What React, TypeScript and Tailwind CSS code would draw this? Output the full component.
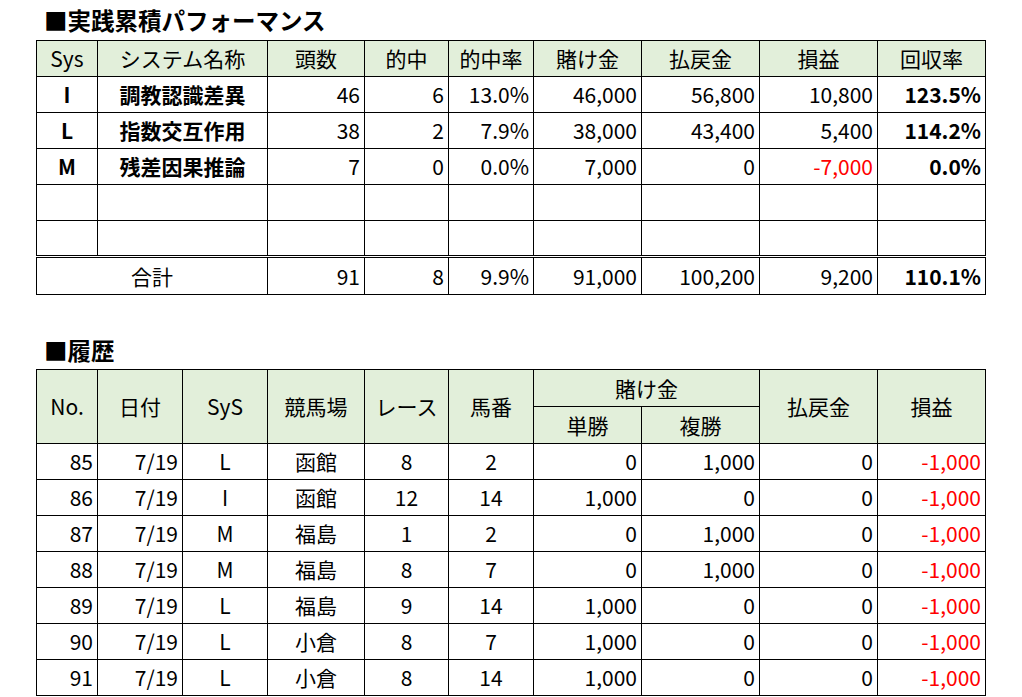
import React from "react";

const perf = [
  { sys: "I", name: "調教認識差異", n: "46", hit: "6", rate: "13.0%", bet: "46,000", ret: "56,800", pl: "10,800", rec: "123.5%", neg: false },
  { sys: "L", name: "指数交互作用", n: "38", hit: "2", rate: "7.9%", bet: "38,000", ret: "43,400", pl: "5,400", rec: "114.2%", neg: false },
  { sys: "M", name: "残差因果推論", n: "7", hit: "0", rate: "0.0%", bet: "7,000", ret: "0", pl: "-7,000", rec: "0.0%", neg: true },
];

const hist = [
  ["85", "7/19", "L", "函館", "8", "2", "0", "1,000", "0", "-1,000"],
  ["86", "7/19", "I", "函館", "12", "14", "1,000", "0", "0", "-1,000"],
  ["87", "7/19", "M", "福島", "1", "2", "0", "1,000", "0", "-1,000"],
  ["88", "7/19", "M", "福島", "8", "7", "0", "1,000", "0", "-1,000"],
  ["89", "7/19", "L", "福島", "9", "14", "1,000", "0", "0", "-1,000"],
  ["90", "7/19", "L", "小倉", "8", "7", "1,000", "0", "0", "-1,000"],
  ["91", "7/19", "L", "小倉", "8", "14", "1,000", "0", "0", "-1,000"],
];

const cell = "border border-black p-0 h-[36px] align-middle whitespace-nowrap";
const hd = "border border-black p-0 align-middle text-center font-normal bg-[#E2EFDA] whitespace-nowrap";
const R = `${cell} text-right pr-[4px]`;
const C = `${cell} text-center`;
const T = "border border-black border-t-[3px] border-t-black border-double p-0 h-[38px] align-middle whitespace-nowrap";

export default function App() {
  return (
    <div className="w-[1022px] h-[697px] overflow-hidden bg-white text-black font-['Noto_Sans_CJK_JP',sans-serif] text-[21px] leading-none pl-[36px]">
      <div className="pl-[8px] pt-[5px] h-[40px] text-[23.5px] font-bold leading-[30px]">■実践累積パフォーマンス</div>
      <table className="border-collapse table-fixed w-[950px]">
        <colgroup>
          <col className="w-[61px]" />
          <col className="w-[170px]" />
          <col className="w-[97px]" />
          <col className="w-[84px]" />
          <col className="w-[85px]" />
          <col className="w-[108px]" />
          <col className="w-[118px]" />
          <col className="w-[118px]" />
          <col className="w-[108px]" />
        </colgroup>
        <thead>
          <tr>
            {["Sys", "システム名称", "頭数", "的中", "的中率", "賭け金", "払戻金", "損益", "回収率"].map((h) => (
              <th key={h} className={`${hd} h-[36px]`}>{h}</th>
            ))}
          </tr>
        </thead>
        <tbody>
          {perf.map((r) => (
            <tr key={r.sys}>
              <td className={`${C} font-bold`}>{r.sys}</td>
              <td className={`${C} font-bold`}>{r.name}</td>
              <td className={R}>{r.n}</td>
              <td className={R}>{r.hit}</td>
              <td className={R}>{r.rate}</td>
              <td className={R}>{r.bet}</td>
              <td className={R}>{r.ret}</td>
              <td className={`${R} ${r.neg ? "text-[#FF0000]" : ""}`}>{r.pl}</td>
              <td className={`${R} font-bold`}>{r.rec}</td>
            </tr>
          ))}
          {[0, 1].map((i) => (
            <tr key={`e${i}`}>
              {Array.from({ length: 9 }).map((_, j) => (
                <td key={j} className={cell}></td>
              ))}
            </tr>
          ))}
          <tr>
            <td colSpan={2} className={`${T} text-center`}>合計</td>
            <td className={`${T} text-right pr-[4px]`}>91</td>
            <td className={`${T} text-right pr-[4px]`}>8</td>
            <td className={`${T} text-right pr-[4px]`}>9.9%</td>
            <td className={`${T} text-right pr-[4px]`}>91,000</td>
            <td className={`${T} text-right pr-[4px]`}>100,200</td>
            <td className={`${T} text-right pr-[4px]`}>9,200</td>
            <td className={`${T} text-right pr-[4px] font-bold`}>110.1%</td>
          </tr>
        </tbody>
      </table>

      <div className="pl-[8px] pt-[40px] h-[74px] text-[23.5px] font-bold leading-[30px]">■履歴</div>
      <table className="border-collapse table-fixed w-[950px]">
        <colgroup>
          <col className="w-[61px]" />
          <col className="w-[85px]" />
          <col className="w-[85px]" />
          <col className="w-[97px]" />
          <col className="w-[84px]" />
          <col className="w-[85px]" />
          <col className="w-[108px]" />
          <col className="w-[118px]" />
          <col className="w-[118px]" />
          <col className="w-[108px]" />
        </colgroup>
        <thead>
          <tr>
            {["No.", "日付", "SyS", "競馬場", "レース", "馬番"].map((h) => (
              <th key={h} rowSpan={2} className={hd}>{h}</th>
            ))}
            <th colSpan={2} className={`${hd} h-[37px]`}>賭け金</th>
            <th rowSpan={2} className={hd}>払戻金</th>
            <th rowSpan={2} className={hd}>損益</th>
          </tr>
          <tr>
            <th className={`${hd} h-[37px]`}>単勝</th>
            <th className={`${hd} h-[37px]`}>複勝</th>
          </tr>
        </thead>
        <tbody>
          {hist.map((r) => (
            <tr key={r[0]}>
              <td className={R}>{r[0]}</td>
              <td className={R}>{r[1]}</td>
              <td className={C}>{r[2]}</td>
              <td className={C}>{r[3]}</td>
              <td className={C}>{r[4]}</td>
              <td className={C}>{r[5]}</td>
              <td className={R}>{r[6]}</td>
              <td className={R}>{r[7]}</td>
              <td className={R}>{r[8]}</td>
              <td className={`${R} text-[#FF0000]`}>{r[9]}</td>
            </tr>
          ))}
        </tbody>
      </table>
    </div>
  );
}
